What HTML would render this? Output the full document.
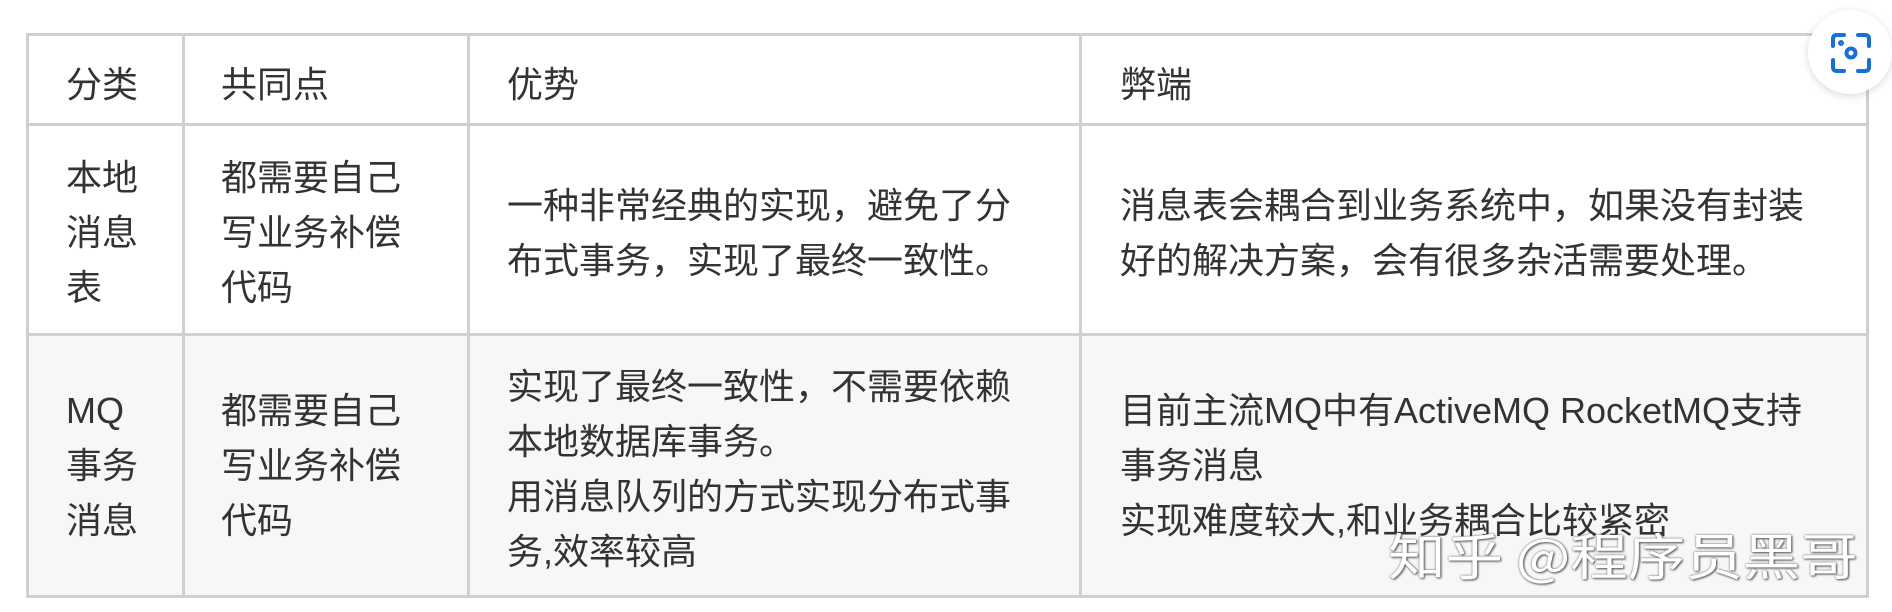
<!DOCTYPE html>
<html><head><meta charset="utf-8"><style>
body{margin:0;width:1892px;height:612px;background:#fff;position:relative;overflow:hidden;font-family:"Liberation Sans","Noto Sans CJK SC",sans-serif;color:#333;}
.l{position:absolute;background:#d0d0d0;}
.t{position:absolute;font-size:36px;line-height:55px;white-space:nowrap;}
</style></head><body>
<div style="position:absolute;left:27px;top:334px;width:1841px;height:263px;background:#f7f7f7"></div>
<div class="l" style="left:27px;top:33px;width:1841px;height:3px"></div>
<div class="l" style="left:27px;top:123px;width:1841px;height:3px"></div>
<div class="l" style="left:27px;top:333px;width:1841px;height:3px"></div>
<div class="l" style="left:27px;top:595px;width:1841px;height:3px"></div>
<div class="l" style="left:26px;top:33px;width:3px;height:565px"></div>
<div class="l" style="left:182px;top:33px;width:3px;height:565px"></div>
<div class="l" style="left:467px;top:33px;width:3px;height:565px"></div>
<div class="l" style="left:1079px;top:33px;width:3px;height:565px"></div>
<div class="l" style="left:1866px;top:33px;width:3px;height:565px"></div>

<div class="t" style="left:66px;top:57px">分类</div>
<div class="t" style="left:221px;top:57px">共同点</div>
<div class="t" style="left:507px;top:57px">优势</div>
<div class="t" style="left:1120px;top:57px">弊端</div>

<div class="t" style="left:66px;top:150px">本地<br>消息<br>表</div>
<div class="t" style="left:221px;top:150px">都需要自己<br>写业务补偿<br>代码</div>
<div class="t" style="left:507px;top:178px">一种非常经典的实现，避免了分<br>布式事务，实现了最终一致性。</div>
<div class="t" style="left:1120px;top:178px">消息表会耦合到业务系统中，如果没有封装<br>好的解决方案，会有很多杂活需要处理。</div>

<div class="t" style="left:66px;top:383px">MQ<br>事务<br>消息</div>
<div class="t" style="left:221px;top:383px">都需要自己<br>写业务补偿<br>代码</div>
<div class="t" style="left:507px;top:359px">实现了最终一致性，不需要依赖<br>本地数据库事务。<br>用消息队列的方式实现分布式事<br>务,效率较高</div>
<div class="t" style="left:1120px;top:383px">目前主流MQ中有ActiveMQ RocketMQ支持<br>事务消息<br>实现难度较大,和业务耦合比较紧密</div>

<div style="position:absolute;left:1388px;top:524px;font-size:50px;line-height:60px;color:#fff;text-shadow:0 0 2px #666,1px 1px 2px #555;white-space:nowrap;font-family:'Noto Sans CJK SC',sans-serif;transform:scaleX(1.15);transform-origin:left top">知乎 @程序员黑哥</div>

<div style="position:absolute;left:1808px;top:10px;width:84px;height:84px;border-radius:50%;background:#fff;box-shadow:0 2px 8px rgba(0,0,0,.15)"></div>
<svg style="position:absolute;left:1830px;top:32px" width="42" height="42" viewBox="0 0 42 42" fill="none" stroke="#1a6fd6" stroke-width="4" stroke-linecap="round">
<path d="M3 14V7q0-4 4-4h7M28 3h7q4 0 4 4v7M39 28v7q0 4-4 4h-7M14 39H7q-4 0-4-4v-7"/>
<circle cx="21" cy="21" r="4.5"/><circle cx="11" cy="11" r="1" fill="#1a6fd6"/>
</svg>
</body></html>
